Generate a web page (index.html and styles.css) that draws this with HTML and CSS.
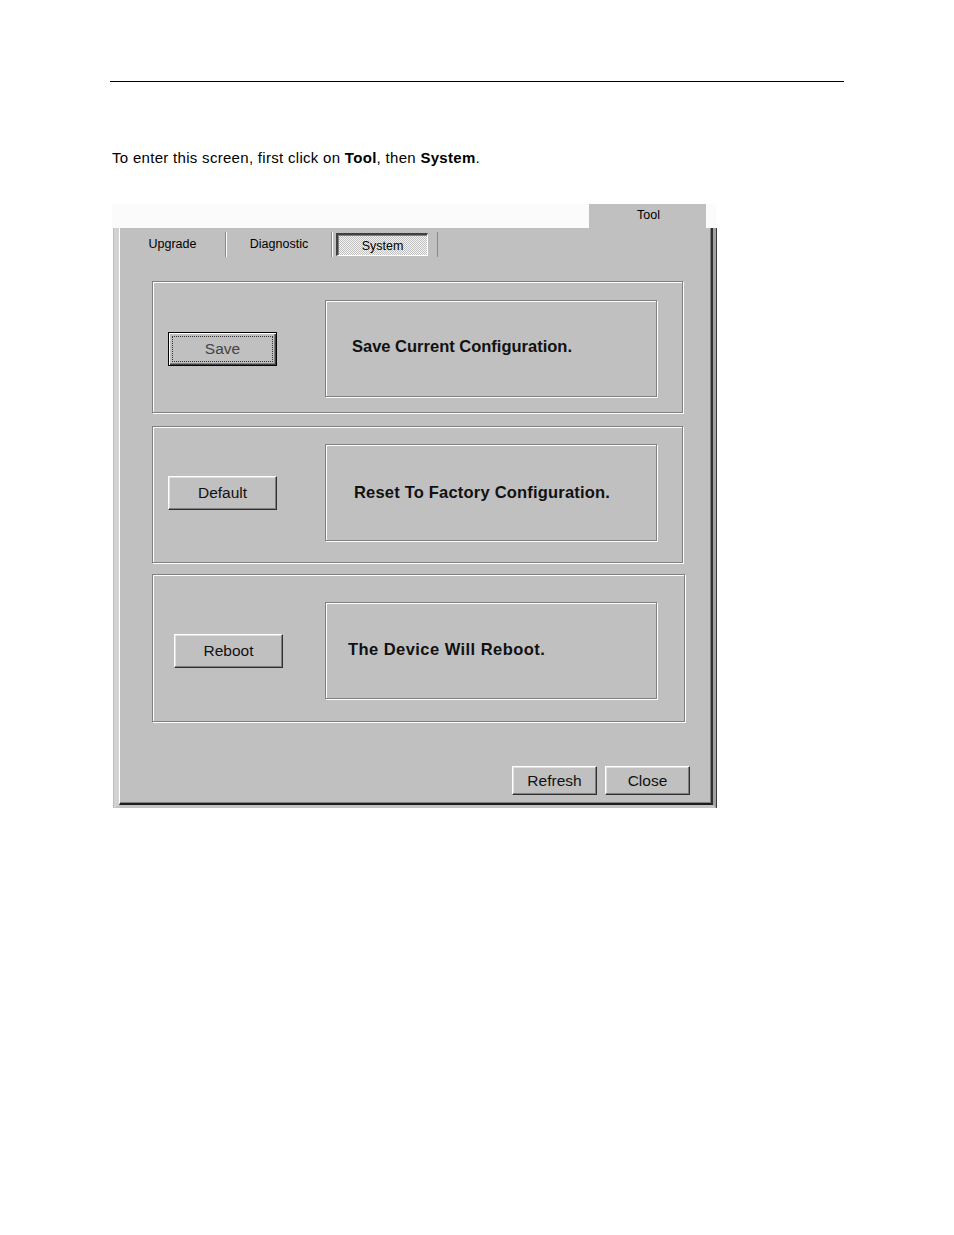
FILE: index.html
```html
<!DOCTYPE html>
<html lang="en">
<head>
<meta charset="utf-8">
<title>System</title>
<link rel="stylesheet" href="styles.css">
</head>
<body>
<div class="page">
  <div class="rule"></div>
  <p class="intro">To enter this screen, first click on <b>Tool</b>, then <b>System</b>.</p>

  <div class="window">
    <div class="tabband">
      <div class="tool-tab">Tool</div>
    </div>
    <div class="frame">
      <div class="panel">
        <div class="tabs">
          <div class="tab">Upgrade</div>
          <div class="tab">Diagnostic</div>
          <div class="tab tab-active"><span class="tab-pressed">System</span></div>
        </div>

        <div class="group group-1">
          <button class="btn btn-default btn-action"><span class="focus">Save</span></button>
          <div class="desc desc-1">Save Current Configuration.</div>
        </div>

        <div class="group group-2">
          <button class="btn btn-action">Default</button>
          <div class="desc desc-2">Reset To Factory Configuration.</div>
        </div>

        <div class="group group-3">
          <button class="btn btn-action">Reboot</button>
          <div class="desc desc-3">The Device Will Reboot.</div>
        </div>

        <div class="footer">
          <button class="btn btn-small">Refresh</button>
          <button class="btn btn-small">Close</button>
        </div>
      </div>
    </div>
  </div>
</div>
</body>
</html>
```

FILE: styles.css
```css
* { box-sizing: border-box; }

html, body {
  margin: 0;
  padding: 0;
  background: #ffffff;
}

body {
  font-family: "Liberation Sans", Arial, sans-serif;
  color: #000;
}

.page {
  width: 954px;
  padding-top: 81px;
}

.rule {
  margin: 0 110px;
  height: 1px;
  background: #000;
}

.intro {
  margin: 68px 0 0 112px;
  font-size: 15px;
  letter-spacing: 0.3px;
  line-height: 16px;
}

.intro b { font-weight: bold; }

/* window */
.window {
  margin: 38px 0 0 114px;
  width: 602px;
}

.tabband {
  height: 24px;
  background: #fbfbfb;
  margin-left: -2px;
  display: flex;
  justify-content: flex-end;
}

.tool-tab {
  width: 117px;
  margin-right: 10px;
  background: #c0c0c0;
  font-size: 12.5px;
  line-height: 22px;
  text-align: center;
  padding-left: 2px;
}

.frame {
  width: 602px;
  border-left: 5px solid #d2d2d2;
  border-right: 3px solid #a2a2a2;
  border-bottom: 3px solid #c4c4c4;
  box-shadow: -1px 0 0 #bdbdbd, 1px 0 0 #3a3a3a, 0 1px 0 #4a4a4a;
  background: #c0c0c0;
}

.panel {
  background: #c0c0c0;
  border-left: 1px solid #ffffff;
  border-right: 2px solid #303030;
  border-bottom: 2px solid #1e1e1e;
  box-shadow: inset -1px -1px 0 #808080;
  height: 577px;
  padding-top: 4px;
}

/* tabs */
.tabs {
  display: flex;
  height: 25px;
}

.tab {
  width: 106px;
  height: 25px;
  font-size: 12.5px;
  line-height: 24px;
  text-align: center;
  border-right: 1px solid #8a8a8a;
  border-left: 1px solid #ffffff;
}

.tab:first-child { border-left: 0; }

.tab-active {
  display: flex;
  align-items: center;
  padding-left: 3px;
}

.tab-pressed {
  display: block;
  width: 92px;
  height: 23px;
  line-height: 22px;
  text-align: center;
  border-top: 2px solid #404040;
  border-left: 2px solid #404040;
  border-right: 1px solid #ffffff;
  border-bottom: 1px solid #ffffff;
  box-shadow: inset 1px 1px 0 #808080;
  background-color: #dcdcdc;
  background-image: repeating-conic-gradient(#c0c0c0 0 25%, #f4f4f4 0 50%);
  background-size: 2px 2px;
}

/* groups */
.group {
  display: flex;
  align-items: center;
  margin-left: 32px;
  width: 531px;
  border: 1px solid #808080;
  box-shadow: inset 1px 1px 0 #ffffff, 1px 1px 0 #ffffff;
}

.group-1 { margin-top: 24px; padding: 18px 0 15px 15px; }
.group-2 { margin-top: 13px; padding: 17px 0 21px 15px; }
.group-3 { margin-top: 11px; padding: 27px 0 22px 21px; width: 533px; }

.desc {
  width: 332px;
  height: 97px;
  margin-left: 48px;
  border: 1px solid #808080;
  box-shadow: inset 1px 1px 0 #ffffff, 1px 1px 0 #ffffff;
  display: flex;
  align-items: center;
  font-size: 16.5px;
  font-weight: bold;
  color: #111;
}

.desc-1 { padding: 0 0 5px 26px; }
.desc-2 { padding: 0 0 0 28px; letter-spacing: 0.2px; }
.desc-3 { padding: 0 0 3px 22px; margin-left: 42px; letter-spacing: 0.45px; }

/* buttons */
.btn {
  font-family: "Liberation Sans", Arial, sans-serif;
  font-size: 15.5px;
  color: #111;
  background: #c0c0c0;
  border-top: 1px solid #ffffff;
  border-left: 1px solid #ffffff;
  border-right: 1px solid #303030;
  border-bottom: 1px solid #303030;
  box-shadow: inset -1px -1px 0 #808080, inset 1px 1px 0 #dfdfdf;
  padding: 0;
  margin: 0;
  display: flex;
  align-items: center;
  justify-content: center;
}

.btn-action {
  width: 109px;
  height: 34px;
  flex: none;
}

.btn-default {
  border: 1px solid #000;
  box-shadow: inset 1px 1px 0 #ffffff, inset -1px -1px 0 #404040, inset -2px -2px 0 #808080;
  padding: 3px;
  color: #444;
}

.focus {
  display: flex;
  align-items: center;
  justify-content: center;
  width: 100%;
  height: 100%;
  border: 1px dotted #333;
}

.footer {
  display: flex;
  justify-content: flex-end;
  gap: 8px;
  margin-top: 44px;
  padding-right: 21px;
}

.btn-small {
  width: 85px;
  height: 29px;
}
```
